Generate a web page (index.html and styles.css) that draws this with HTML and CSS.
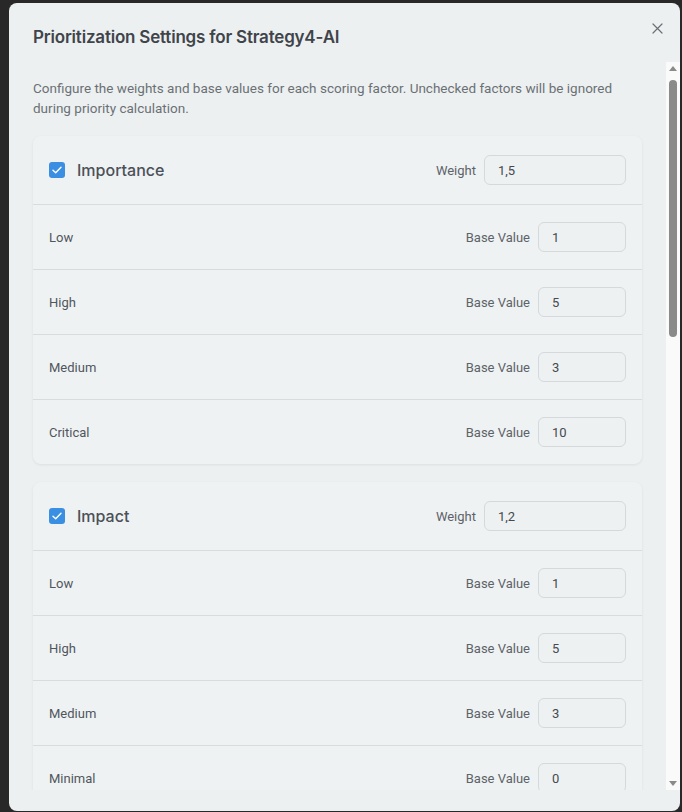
FILE: index.html
```html
<!DOCTYPE html>
<html>

<head>
  <title>Prioritization Settings</title>
  <link rel="stylesheet" href="styles.css">
</head>

<body>
  <div class="modal">
    <!-- Header -->
    <div class="modal-header">
      <h2 class="modal-title">Prioritization Settings for Strategy4-AI</h2>
      <button class="close-btn" aria-label="Close">
        <svg width="11" height="11" viewBox="0 0 11 11">
          <path d="M1 1L10 10M10 1L1 10" stroke="#6b7075" stroke-width="1.2" fill="none" stroke-linecap="round"/>
        </svg>
      </button>
    </div>

    <div class="modal-main">
      <!-- Scrollable body -->
      <div class="modal-body">
        <p class="description">Configure the weights and base values for each scoring factor. Unchecked factors will be ignored during priority calculation.</p>

        <!-- Importance factor -->
        <div class="factor-card">
          <div class="factor-header">
            <label class="factor-name">
              <span class="checkbox">
                <svg width="10" height="8" viewBox="0 0 10 8">
                  <path d="M1 4.2L3.7 6.8L9 1.2" stroke="#fff" stroke-width="1.4" fill="none" stroke-linecap="round" stroke-linejoin="round"/>
                </svg>
              </span>
              Importance
            </label>
            <div class="field">
              <span class="field-label">Weight</span>
              <input class="input weight-input" type="text" value="1,5">
            </div>
          </div>
          <div class="value-row">
            <span class="value-name">Low</span>
            <div class="field">
              <span class="field-label">Base Value</span>
              <input class="input base-input" type="text" value="1">
            </div>
          </div>
          <div class="value-row">
            <span class="value-name">High</span>
            <div class="field">
              <span class="field-label">Base Value</span>
              <input class="input base-input" type="text" value="5">
            </div>
          </div>
          <div class="value-row">
            <span class="value-name">Medium</span>
            <div class="field">
              <span class="field-label">Base Value</span>
              <input class="input base-input" type="text" value="3">
            </div>
          </div>
          <div class="value-row">
            <span class="value-name">Critical</span>
            <div class="field">
              <span class="field-label">Base Value</span>
              <input class="input base-input" type="text" value="10">
            </div>
          </div>
        </div>

        <!-- Impact factor -->
        <div class="factor-card">
          <div class="factor-header">
            <label class="factor-name">
              <span class="checkbox">
                <svg width="10" height="8" viewBox="0 0 10 8">
                  <path d="M1 4.2L3.7 6.8L9 1.2" stroke="#fff" stroke-width="1.4" fill="none" stroke-linecap="round" stroke-linejoin="round"/>
                </svg>
              </span>
              Impact
            </label>
            <div class="field">
              <span class="field-label">Weight</span>
              <input class="input weight-input" type="text" value="1,2">
            </div>
          </div>
          <div class="value-row">
            <span class="value-name">Low</span>
            <div class="field">
              <span class="field-label">Base Value</span>
              <input class="input base-input" type="text" value="1">
            </div>
          </div>
          <div class="value-row">
            <span class="value-name">High</span>
            <div class="field">
              <span class="field-label">Base Value</span>
              <input class="input base-input" type="text" value="5">
            </div>
          </div>
          <div class="value-row">
            <span class="value-name">Medium</span>
            <div class="field">
              <span class="field-label">Base Value</span>
              <input class="input base-input" type="text" value="3">
            </div>
          </div>
          <div class="value-row">
            <span class="value-name">Minimal</span>
            <div class="field">
              <span class="field-label">Base Value</span>
              <input class="input base-input" type="text" value="0">
            </div>
          </div>
        </div>
      </div>

      <!-- Scrollbar -->
      <div class="scrollbar">
        <span class="scroll-arrow up"></span>
        <span class="scroll-thumb"></span>
        <span class="scroll-space"></span>
        <span class="scroll-arrow down"></span>
      </div>
    </div>
  </div>
</body>

</html>
```

FILE: styles.css
```css
/* Global Styles */
body {
  margin: 0;
  background-color: #282828;
  font-family: Roboto, "Liberation Sans", sans-serif;
  overflow: hidden;
}

/* Modal */
.modal {
  position: relative;
  margin: 3px 0 0 9px;
  width: 671px;
  height: 808px;
  background-color: #edf0f1;
  border-radius: 8px;
  display: flex;
  flex-direction: column;
}

.modal-header {
  padding: 22px 24px 13px;
}

.modal-title {
  margin: 0;
  font-family: Inter, sans-serif;
  font-size: 17px;
  font-weight: 600;
  line-height: 24px;
  color: #3f444b;
  letter-spacing: -0.2px;
}

.close-btn {
  position: absolute;
  top: 17px;
  right: 15px;
  width: 16px;
  height: 16px;
  padding: 0;
  border: none;
  background: none;
  display: flex;
  align-items: center;
  justify-content: center;
  cursor: pointer;
}

.modal-main {
  flex: 1;
  min-height: 0;
  display: flex;
  margin-bottom: 21px;
}

.modal-body {
  flex: 1;
  min-width: 0;
  overflow: hidden;
  padding: 16px 24px 0 24px;
}

.description {
  margin: 0 0 18px;
  font-size: 13.5px;
  line-height: 20px;
  color: #6b7075;
}

/* Scrollbar */
.scrollbar {
  width: 14px;
  background-color: #fafafa;
  display: flex;
  flex-direction: column;
  align-items: center;
}

.scroll-arrow {
  width: 0;
  height: 0;
  border-left: 4px solid transparent;
  border-right: 4px solid transparent;
}

.scroll-arrow.up {
  margin-top: 4px;
  border-bottom: 5px solid #8a8a8a;
}

.scroll-arrow.down {
  margin-bottom: 4px;
  border-top: 5px solid #8a8a8a;
}

.scroll-thumb {
  width: 8px;
  height: 257px;
  margin-top: 9px;
  border-radius: 4px;
  background-color: #8a8a8a;
}

.scroll-space {
  flex: 1;
}

/* Factor cards */
.factor-card {
  background-color: #eff2f3;
  border-radius: 8px;
  box-shadow: 0 1px 3px rgba(0, 0, 0, 0.07);
  margin-bottom: 18px;
}

.factor-header,
.value-row {
  display: flex;
  align-items: center;
  justify-content: space-between;
  padding: 17px 16px;
  border-bottom: 1px solid #d9dcdf;
}

.factor-header {
  padding: 19px 16px;
}

.value-row:last-child {
  border-bottom: none;
}

.factor-name {
  display: flex;
  align-items: center;
  gap: 12px;
  font-family: Inter, sans-serif;
  font-size: 16px;
  font-weight: 500;
  color: #4b5058;
}

.checkbox {
  width: 16px;
  height: 16px;
  border-radius: 3px;
  background-color: #3b8fe2;
  display: flex;
  align-items: center;
  justify-content: center;
}

.value-name {
  font-size: 13px;
  color: #50565d;
}

.field {
  display: flex;
  align-items: center;
  gap: 8px;
}

.field-label {
  font-size: 13px;
  color: #5d6369;
}

.input {
  box-sizing: border-box;
  height: 30px;
  padding: 0 13px;
  border: 1px solid #d5d9dc;
  border-radius: 6px;
  background-color: #eef1f2;
  font-family: Roboto, "Liberation Sans", sans-serif;
  font-size: 13px;
  color: #454a50;
  outline: none;
}

.weight-input {
  width: 142px;
}

.base-input {
  width: 88px;
}
```
